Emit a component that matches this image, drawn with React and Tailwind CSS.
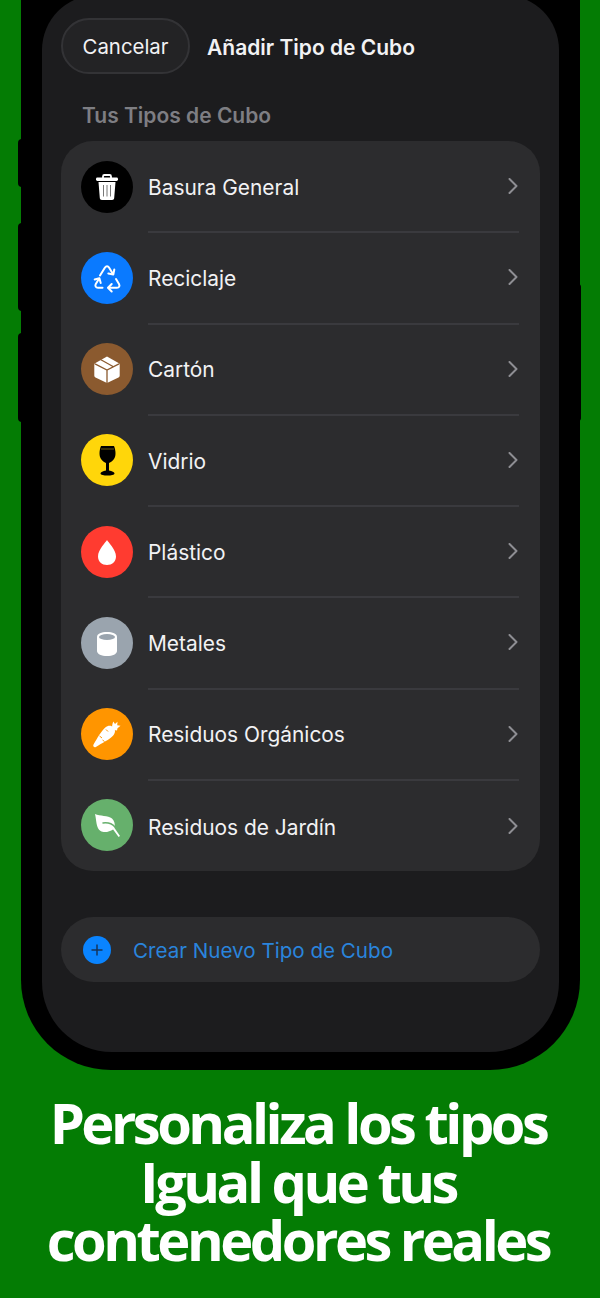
const TrashIcon = () => (
  <svg width="52" height="52" viewBox="0 0 52 52">
    <path d="M22 17v-1.600c0-.9.6-1.400 1.400-1.400h5.200c.8 0 1.400.5 1.400 1.400V17" fill="none" stroke="#fff" strokeWidth="1.800" />
    <rect x="15" y="16.500" width="22" height="3.400" rx="1.400" fill="#fff" />
    <path d="M17.500 21h17l-1.300 16c-.1 1.300-.9 2-2.100 2H20.900c-1.200 0-2-.7-2.100-2z" fill="#fff" />
    <path d="M22.500 24v11.500M26 24v11.500M29.500 24v11.500" stroke="#777" strokeWidth="1" />
  </svg>
);

const RecycleIcon = () => (
  <svg width="52" height="52" viewBox="0 0 52 52" fill="none" stroke="#fff" strokeWidth="2" strokeLinecap="round" strokeLinejoin="round">
    <path d="M19 23.500l5-8c1.100-1.600 3-1.600 4 0l4 6.500" />
    <path d="M33.300 17.500l-1 5-5-1" />
    <path d="M35 27l3 5c1.100 2 .1 3.800-2 3.800h-8.500" />
    <path d="M30.700 32l-3.700 3.800 3.700 3.700" />
    <path d="M21.500 35.800H17c-2.300 0-3.200-1.900-2.200-3.700l3.200-5.300" />
    <path d="M13.700 27.500l4.700-1.300 1.300 4.800" />
  </svg>
);

const BoxIcon = () => (
  <svg width="52" height="52" viewBox="0 0 52 52">
    <path d="M26 13.500l11.500 6.500c.8.400 1.200 1 1.200 1.800v11c0 .8-.4 1.400-1.200 1.800L26 40 14.500 34.600c-.8-.4-1.200-1-1.200-1.800v-11c0-.8.4-1.400 1.200-1.800z" fill="#fff" />
    <path d="M14 20.800l12 6.200 12-6.200M26 27v13M19.500 16.500l12.500 7" stroke="#8b5a2f" strokeWidth="1.300" fill="none" />
  </svg>
);

const WineIcon = () => (
  <svg width="52" height="52" viewBox="0 0 52 52">
    <path d="M20 12H33C35 17 35 22 33 25C31.500 27.500 29 28.500 28 29V36.500C31 37 33.500 38 33.500 39.500C33.500 41 30 41.500 26.500 41.500C23 41.500 19.500 41 19.500 39.500C19.500 38 22 37 25 36.500V29C24 28.500 21.500 27.500 20 25C18 22 18 17 20 12Z" fill="#000" />
    <path d="M20 15h13" stroke="#6b5a10" strokeWidth="1" />
  </svg>
);

const DropIcon = () => (
  <svg width="52" height="52" viewBox="0 0 52 52">
    <path d="M26 14c-.8 1.800-9 9.500-9 16.500 0 5 4 8.500 9 8.500s9-3.500 9-8.500C35 23.500 26.800 15.800 26 14z" fill="#fff" />
  </svg>
);

const CanIcon = () => (
  <svg width="52" height="52" viewBox="0 0 52 52">
    <path d="M16 20c0-3.500 4.500-5 10-5s10 1.500 10 5v14c0 3-4.500 5-10 5s-10-2-10-5z" fill="#fff" />
    <ellipse cx="26" cy="20" rx="8" ry="3" fill="#9aa4ae" />
  </svg>
);

const CarrotIcon = () => (
  <svg width="52" height="52" viewBox="0 0 52 52">
    <path d="M12.800 38.800c-.8-.8-.6-1.800 0-2.800 3.500-6 7.500-13 11.500-16.500 2.700-2.300 6.200-2.100 8.200-.1s2.100 5.200-.3 8c-3.500 4-11.500 7.700-17 11.300-1 .6-1.800.8-2.400.1z" fill="#fff" />
    <path d="M31 18.500c.5-2 .5-3.500 1.300-5l1.700 2.500 2.500-2.300-.3 3.500 3.300.5-3 2.500-.5 2.300-3-.5z" fill="#fff" />
    <path d="M18.500 28l2.500 2M25 21.500l2 2M21.500 32l2 1.500" stroke="#ff9500" strokeWidth="1" />
  </svg>
);

const LeafIcon = () => (
  <svg width="52" height="52" viewBox="0 0 52 52">
    <path d="M14 15c5 2.500 13 1 17 4.500 2.500 2.200 3.300 6 2.500 9.500l5.500 8-1.400 1-5.500-7.500c-3.500 2.500-9.500 3.500-12.500 1.500C15 29 15.500 21 14 15z" fill="#fff" />
    <path d="M22 24c4-.5 9 .5 12 4" fill="none" stroke="#66b06c" strokeWidth="1.500" strokeLinecap="round" />
  </svg>
);

const binTypes = [
  { name: 'Basura General', circle: 'bg-black', icon: <TrashIcon /> },
  { name: 'Reciclaje', circle: 'bg-[#0a7aff]', icon: <RecycleIcon /> },
  { name: 'Cartón', circle: 'bg-[#8b5a2f]', icon: <BoxIcon /> },
  { name: 'Vidrio', circle: 'bg-[#ffd60a]', icon: <WineIcon /> },
  { name: 'Plástico', circle: 'bg-[#ff3b30]', icon: <DropIcon /> },
  { name: 'Metales', circle: 'bg-[#9aa4ae]', icon: <CanIcon /> },
  { name: 'Residuos Orgánicos', circle: 'bg-[#ff9500]', icon: <CarrotIcon /> },
  { name: 'Residuos de Jardín', circle: 'bg-[#66b06c]', icon: <LeafIcon /> },
];

const BinRow = ({ bin, last }) => (
  <div className="flex h-[91.25px] items-center pl-5 pr-[21px]">
    <div className={`flex h-[52px] w-[52px] shrink-0 items-center justify-center rounded-full ${bin.circle}`}>
      {bin.icon}
    </div>
    <div className={`ml-[15px] flex h-[92.25px] flex-1 items-center justify-between self-start ${last ? '' : 'border-b-2 border-[#3a3a3e]'}`}>
      <span className="pt-[3px] text-[20.9px] text-[#f2f2f4]">{bin.name}</span>
      <svg width="10" height="16" viewBox="0 0 10 16" fill="none" stroke="#8e8e93" strokeWidth="2" strokeLinecap="round" strokeLinejoin="round" className="mr-px">
        <path d="M1.500 1l7 7-7 7" />
      </svg>
    </div>
  </div>
);

export default function App() {
  return (
    <div className="relative h-[1298px] w-[600px] overflow-hidden bg-[#047c04] font-['Inter',sans-serif]">
      {/* side buttons */}
      <div className="absolute left-[18px] top-[139px] h-[48px] w-[4px] rounded-l bg-black" />
      <div className="absolute left-[18px] top-[223px] h-[88px] w-[4px] rounded-l bg-black" />
      <div className="absolute left-[18px] top-[333px] h-[89px] w-[4px] rounded-l bg-black" />
      <div className="absolute left-[578px] top-[284px] h-[137px] w-[3px] rounded-r bg-black" />

      <div className="ml-[21px] -mt-[25px] h-[1095px] w-[559px] rounded-b-[90px] bg-black px-[21px] pb-[18px] pt-5">
        <div className="h-full rounded-t-[55px] rounded-b-[70px] bg-[#1c1c1e] px-[19px] pt-[23px]">
          <div className="flex items-center">
            <div className="flex h-[56px] w-[129px] items-center justify-center rounded-full border-2 border-[#333336] bg-[#232325] pt-[3px] text-[20.4px] text-[#f2f2f4]">
              Cancelar
            </div>
            <div className="ml-[17px] pt-[3px] text-[21px] font-semibold text-[#f2f2f4]">Añadir Tipo de Cubo</div>
          </div>

          <div className="ml-[21px] mt-[28px] text-[21px] font-semibold leading-[28px] text-[#7e7e83]">Tus Tipos de Cubo</div>

          <div className="mt-[11px] w-[479px] rounded-[32px] bg-[#2c2c2e]">
            {binTypes.map((bin, i) => (
              <BinRow key={bin.name} bin={bin} last={i === binTypes.length - 1} />
            ))}
          </div>

          <div className="mt-[46px] flex h-[65px] w-[479px] items-center rounded-full bg-[#2c2c2e] pl-[22px]">
            <div className="flex h-7 w-7 items-center justify-center rounded-full bg-[#0a84ff]">
              <svg width="16" height="16" viewBox="0 0 16 16">
                <path d="M8 2.500v11M2.500 8h11" stroke="#16345c" strokeWidth="1.500" />
              </svg>
            </div>
            <span className="ml-[22px] pt-[3px] text-[20.6px] text-[#2a84dc]">Crear Nuevo Tipo de Cubo</span>
          </div>
        </div>
      </div>

      <div className="mt-[23px] pr-1 text-center font-['Open_Sans',sans-serif] text-[56px] font-bold leading-[58.5px] tracking-[-3.5px] text-white">
        <div>Personaliza los tipos</div>
        <div>Igual que tus</div>
        <div>contenedores reales</div>
      </div>
    </div>
  );
}
